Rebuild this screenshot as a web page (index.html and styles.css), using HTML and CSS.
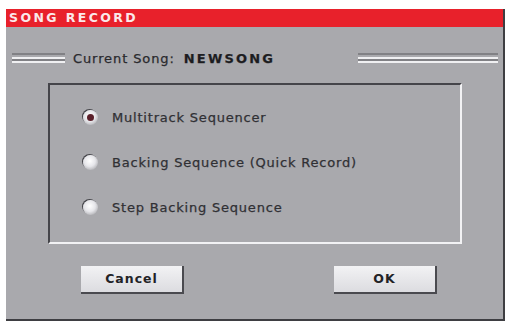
FILE: index.html
```html
<!DOCTYPE html>
<html lang="en">
<head>
  <meta charset="UTF-8" />
  <title>Song Record</title>
  <link rel="stylesheet" href="styles.css">
</head>
<body>

  <div class="dialog">
    <div class="title">SONG RECORD</div>

    <!-- Current song -->
    <div class="song-row">
      <div class="lines left"></div>
      <div class="song-label">Current Song: <b>NEWSONG</b></div>
      <div class="spacer"></div>
      <div class="lines right"></div>
    </div>

    <!-- Options -->
    <div class="panel">
      <div class="option"><span class="radio on"></span>Multitrack Sequencer</div>
      <div class="option"><span class="radio"></span>Backing Sequence (Quick Record)</div>
      <div class="option"><span class="radio"></span>Step Backing Sequence</div>
    </div>

    <div class="buttons">
      <div class="btn">Cancel</div>
      <div class="btn">OK</div>
    </div>
  </div>

</body>
</html>
```

FILE: styles.css
```css
* {
  box-sizing: border-box;
}

body {
  margin: 0;
  background: #fff;
  font-family: 'DejaVu Sans', sans-serif;
  color: #2a2a2e;
}

.dialog {
  width: 499px;
  height: 312px;
  margin: 9px 0 0 6px;
  background: #a9a9ad;
  border-right: 2px solid #3e3e42;
  border-bottom: 2px solid #3e3e42;
  display: flex;
  flex-direction: column;
}

.title {
  height: 18px;
  background: #e8212b;
  color: #fbe9ea;
  font-weight: bold;
  font-size: 12.5px;
  letter-spacing: 2.4px;
  line-height: 18px;
  padding-left: 3px;
}

.song-row {
  display: flex;
  align-items: center;
  height: 24px;
  margin-top: 19px;
}

.lines {
  height: 10px;
  border-top: 2px solid #818185;
  border-bottom: 2px solid #f0f0f2;
  position: relative;
}

.lines::after {
  content: "";
  position: absolute;
  left: 0;
  right: 0;
  top: 2px;
  height: 2px;
  background: #f0f0f2;
  box-shadow: 0 2px 0 #818185;
}

.lines.left {
  width: 53px;
  margin-left: 6px;
}

.lines.right {
  width: 140px;
  margin-right: 5px;
}

.song-label {
  margin-left: 8px;
  font-size: 13px;
  letter-spacing: 0.9px;
  -webkit-text-stroke: 0.25px #2a2a2e;
}

.song-label b {
  font-size: 13px;
  letter-spacing: 2.2px;
  margin-left: 4px;
  color: #1c1c20;
}

.spacer {
  flex: 1;
}

.panel {
  margin: 13px 0 0 42px;
  width: 414px;
  height: 161px;
  border-top: 2px solid #45454a;
  border-left: 2px solid #45454a;
  border-right: 2px solid #f2f2f4;
  border-bottom: 2px solid #f2f2f4;
  padding-top: 23px;
}

.option {
  display: flex;
  align-items: center;
  height: 18px;
  margin-bottom: 27px;
  font-size: 13px;
  letter-spacing: 0.8px;
  color: #303034;
  -webkit-text-stroke: 0.25px #303034;
}

.radio {
  width: 15px;
  height: 15px;
  border-radius: 50%;
  margin: 0 14px 0 33px;
  background: radial-gradient(circle at 45% 40%, #fff 0, #e6e6ea 45%, #b8b8bc 75%);
  box-shadow: -1px -1px 0 #46464b;
  position: relative;
}

.radio.on::after {
  content: "";
  position: absolute;
  left: 4px;
  top: 4px;
  width: 7px;
  height: 7px;
  border-radius: 50%;
  background: #5a1f2a;
}

.buttons {
  display: flex;
  justify-content: space-between;
  margin: 22px 66px 0 75px;
}

.btn {
  width: 103px;
  height: 28px;
  background: linear-gradient(#f2f2f4, #dcdce0);
  border-right: 2px solid #4a4a4f;
  border-bottom: 2px solid #4a4a4f;
  text-align: center;
  line-height: 26px;
  font-weight: bold;
  font-size: 12.5px;
  letter-spacing: 1px;
  color: #222226;
}
```
